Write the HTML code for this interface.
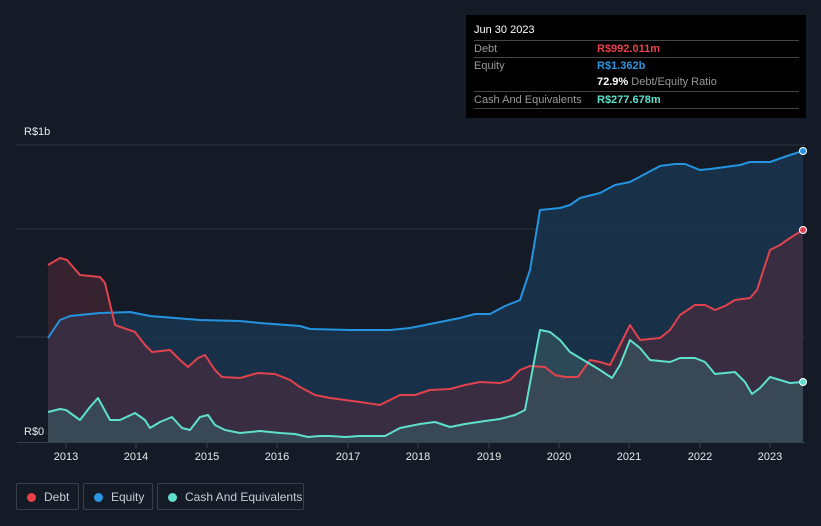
<!DOCTYPE html>
<html><head><meta charset="utf-8"><style>
body{margin:0;width:821px;height:526px;background:#151b26;font-family:"Liberation Sans",sans-serif;overflow:hidden;position:relative}
.tt{position:absolute;left:466px;top:15px;width:340px;height:103px;background:#000;font-size:11px}
.tt .r{position:absolute;left:8px;width:325px;border-top:1px solid #444;height:17px;line-height:17px;color:#999}
.tt .v{position:absolute;left:123px}
.lg{position:absolute;top:483px;height:27px;border:1px solid #3a404b;border-radius:2px;color:#c8ccd2;font-size:12px;line-height:26px;box-sizing:border-box;padding-left:27px;white-space:nowrap}
.lg i{position:absolute;left:10px;top:9px;width:9px;height:9px;border-radius:50%}
</style></head><body>
<svg width="821" height="526" style="position:absolute;left:0;top:0">
<g stroke="#2c3340" stroke-width="1"><line x1="17" y1="145" x2="805" y2="145"/><line x1="17" y1="229" x2="805" y2="229"/><line x1="17" y1="337" x2="805" y2="337"/></g>
<path d="M48,338 L60,320 70,316 100,313 130,312 150,316 200,320 240,321 260,323 300,326 310,329 350,330 390,330 410,328 430,324 460,318 475,314 490,314 505,306 520,300 530,270 540,210 560,208 570,205 580,198 600,193 615,185 630,182 645,174 660,166 675,164 685,164 700,170 710,169 725,167 740,165 750,162 770,162 790,155 803,151 L803,442 48,442Z" fill="#1a3a56" fill-opacity="0.75"/>
<path d="M48,265 L60,258 67,260 80,275 100,277 105,283 115,325 135,332 145,345 152,352 170,350 180,360 188,367 198,358 205,355 215,370 222,377 240,378 258,373 275,374 290,380 300,387 315,395 330,398 345,400 360,402 380,405 390,400 400,395 415,395 430,390 450,389 465,385 480,382 500,383 510,380 520,370 530,366 545,367 555,375 565,377 578,377 590,360 600,362 610,365 620,345 630,325 640,340 660,338 670,330 680,315 695,305 705,305 715,310 725,306 735,300 750,298 757,290 770,250 780,245 790,238 803,230 L803,442 48,442Z" fill="#5a2a3a" fill-opacity="0.5"/>
<path d="M48,412 L60,409 66,410 80,420 90,407 98,398 110,420 120,420 135,413 145,420 150,428 160,422 172,417 182,428 190,430 200,417 208,415 215,425 225,430 240,433 260,431 280,433 295,434 308,437 320,436 330,436 345,437 360,436 385,436 400,428 420,424 435,422 450,427 465,424 485,421 500,419 515,415 525,410 540,330 550,332 560,340 570,352 590,364 600,370 612,378 620,365 630,340 640,348 650,360 670,362 680,358 695,358 705,362 715,374 725,373 735,372 745,382 752,394 760,388 770,377 780,380 790,383 803,382 L803,442 48,442Z" fill="#3a5a62" fill-opacity="0.6"/>
<g fill="none" stroke-width="2" stroke-linejoin="round">
<polyline stroke="#2394e0" points="48,338 60,320 70,316 100,313 130,312 150,316 200,320 240,321 260,323 300,326 310,329 350,330 390,330 410,328 430,324 460,318 475,314 490,314 505,306 520,300 530,270 540,210 560,208 570,205 580,198 600,193 615,185 630,182 645,174 660,166 675,164 685,164 700,170 710,169 725,167 740,165 750,162 770,162 790,155 803,151"/>
<polyline stroke="#e0434e" points="48,265 60,258 67,260 80,275 100,277 105,283 115,325 135,332 145,345 152,352 170,350 180,360 188,367 198,358 205,355 215,370 222,377 240,378 258,373 275,374 290,380 300,387 315,395 330,398 345,400 360,402 380,405 390,400 400,395 415,395 430,390 450,389 465,385 480,382 500,383 510,380 520,370 530,366 545,367 555,375 565,377 578,377 590,360 600,362 610,365 620,345 630,325 640,340 660,338 670,330 680,315 695,305 705,305 715,310 725,306 735,300 750,298 757,290 770,250 780,245 790,238 803,230"/>
<polyline stroke="#5ee0cc" points="48,412 60,409 66,410 80,420 90,407 98,398 110,420 120,420 135,413 145,420 150,428 160,422 172,417 182,428 190,430 200,417 208,415 215,425 225,430 240,433 260,431 280,433 295,434 308,437 320,436 330,436 345,437 360,436 385,436 400,428 420,424 435,422 450,427 465,424 485,421 500,419 515,415 525,410 540,330 550,332 560,340 570,352 590,364 600,370 612,378 620,365 630,340 640,348 650,360 670,362 680,358 695,358 705,362 715,374 725,373 735,372 745,382 752,394 760,388 770,377 780,380 790,383 803,382"/>
</g>
<circle cx="803" cy="151" r="3.5" fill="#2394e0" stroke="#fff" stroke-width="1"/>
<circle cx="803" cy="230" r="3.5" fill="#e0434e" stroke="#fff" stroke-width="1"/>
<circle cx="803" cy="382" r="3.5" fill="#5ee0cc" stroke="#fff" stroke-width="1"/>
<line x1="17" y1="442.5" x2="805" y2="442.5" stroke="#3a404b"/>
<g stroke="#3a404b"><line x1="66" y1="443" x2="66" y2="448"/><line x1="136" y1="443" x2="136" y2="448"/><line x1="207" y1="443" x2="207" y2="448"/><line x1="277" y1="443" x2="277" y2="448"/><line x1="348" y1="443" x2="348" y2="448"/><line x1="418" y1="443" x2="418" y2="448"/><line x1="489" y1="443" x2="489" y2="448"/><line x1="559" y1="443" x2="559" y2="448"/><line x1="629" y1="443" x2="629" y2="448"/><line x1="700" y1="443" x2="700" y2="448"/><line x1="770" y1="443" x2="770" y2="448"/></g>
<g fill="#e6e8eb" font-size="11" text-anchor="middle" font-family="Liberation Sans"><text x="66" y="460">2013</text><text x="136" y="460">2014</text><text x="207" y="460">2015</text><text x="277" y="460">2016</text><text x="348" y="460">2017</text><text x="418" y="460">2018</text><text x="489" y="460">2019</text><text x="559" y="460">2020</text><text x="629" y="460">2021</text><text x="700" y="460">2022</text><text x="770" y="460">2023</text></g>
<g fill="#e6e8eb" font-size="11" font-family="Liberation Sans"><text x="24" y="135">R$1b</text><text x="24" y="435">R$0</text></g>
</svg>
<div class="tt">
<div style="position:absolute;left:8px;top:9px;color:#fff;font-size:11px">Jun 30 2023</div>
<div class="r" style="top:25px">Debt<span class="v" style="color:#e8414a;font-weight:bold">R$992.011m</span></div>
<div class="r" style="top:42px">Equity<span class="v" style="color:#2b95e0;font-weight:bold">R$1.362b</span></div>
<div class="r" style="top:59px;border-top:none"><span class="v"><b style="color:#fff">72.9%</b> Debt/Equity Ratio</span></div>
<div class="r" style="top:76px">Cash And Equivalents<span class="v" style="color:#5ee0cc;font-weight:bold">R$277.678m</span></div>
<div class="r" style="top:93px;height:0"></div>
</div>
<div class="lg" style="left:16px;width:63px"><i style="background:#e8414a"></i>Debt</div>
<div class="lg" style="left:83px;width:70px"><i style="background:#2b95e0"></i>Equity</div>
<div class="lg" style="left:157px;width:147px"><i style="background:#5ee0cc"></i>Cash And Equivalents</div>
</body></html>
